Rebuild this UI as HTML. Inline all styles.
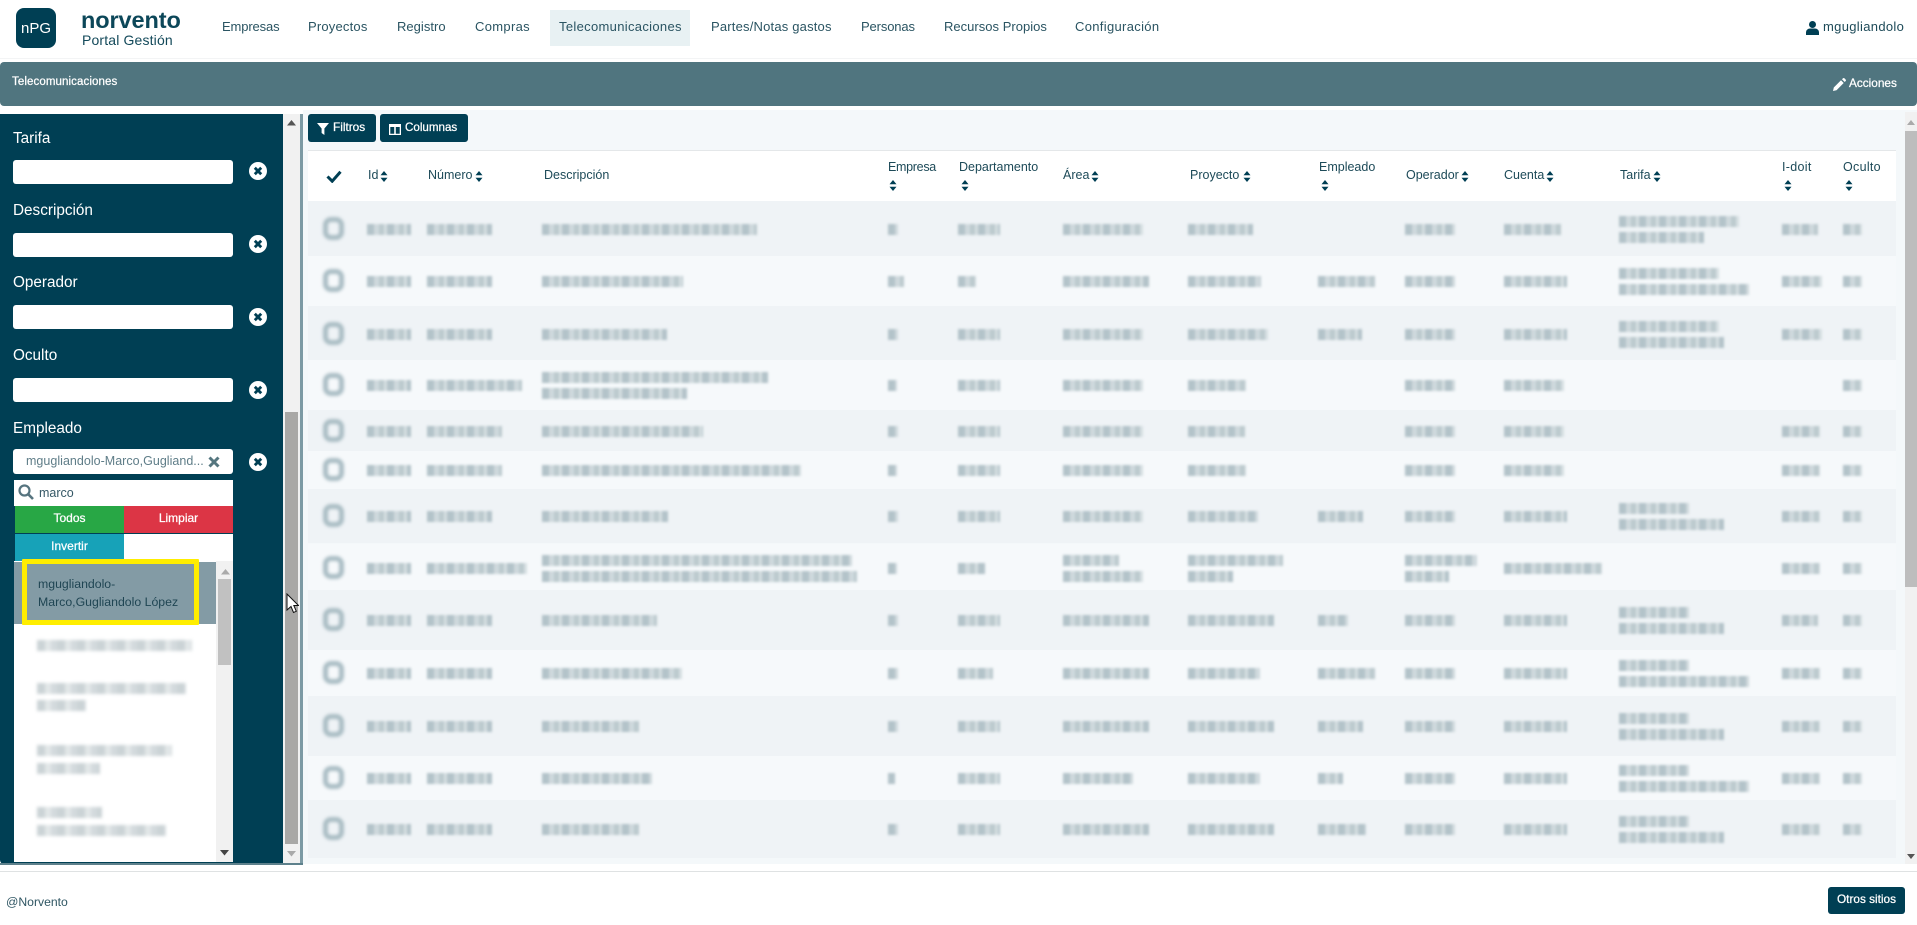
<!DOCTYPE html>
<html lang="es">
<head>
<meta charset="utf-8">
<title>Telecomunicaciones</title>
<style>
html,body{margin:0;padding:0;width:1917px;height:925px;overflow:hidden;background:#fff;font-family:"Liberation Sans",sans-serif;color:#1d4a58}
div,span,a,svg,i{position:absolute;display:block}
.t{white-space:nowrap}
.nav{top:19px;line-height:16px;font-size:13px;letter-spacing:.32px;color:#2a5462;white-space:nowrap}
.lab{left:13px;font-size:15.3px;line-height:18px;color:#fff;white-space:nowrap}
.inp{left:13px;width:220px;height:24px;background:#fff;border-radius:3px}
.clr{left:249px;width:18px;height:18px}
.th{font-size:12.5px;line-height:16px;color:#1d4a58;white-space:nowrap}
.so{width:8px;height:11px}
.r{left:308px;width:1588px}
.o{background:#eff3f6}.e{background:#f6f9fb}
.r i{top:50%;height:11px;margin-top:-5px;filter:blur(1.4px);background:repeating-linear-gradient(90deg,#b3c3c9 0 7px,#cfd9dd 7px 12px,#bccace 12px 17px,#d6dfe2 17px 20px)}
.r i.u{margin-top:-13px}
.r i.d{margin-top:3px}
.r b{position:absolute;display:block;left:15px;top:50%;margin-top:-12px;width:11px;height:13px;border:5px solid #aabdc4;border-radius:8px;filter:blur(1.5px)}
.c1{left:59px}.c2{left:119px}.c3{left:234px}.c4{left:580px}.c5{left:650px}.c6{left:755px}.c7{left:880px}.c8{left:1010px}.c9{left:1097px}.c10{left:1196px}.c11{left:1311px}.c12{left:1474px}.c13{left:1535px}
.li{left:37px;height:11px;filter:blur(1.5px);background:repeating-linear-gradient(90deg,#cbd3d6 0 8px,#e2e7e8 8px 14px,#d3dadd 14px 20px)}
.btn{top:114px;height:28px;background:#003f54;border-radius:3px;color:#fff;font-size:12px;-webkit-text-stroke:.25px #fff;line-height:25px;white-space:nowrap}
.fb{height:27px;line-height:25px;text-align:center;color:#fff;font-size:12px;-webkit-text-stroke:.25px #fff}
</style>
</head>
<body>
<!-- header -->
<div style="left:0;top:0;width:1917px;height:58px;background:#fff;border-bottom:1px solid #f3f4f5"></div>
<div style="left:16px;top:8px;width:40px;height:40px;background:#003f54;border-radius:8px;color:#fff;font-size:15px;line-height:41px;text-align:center">nPG</div>
<div class="t" style="left:81px;top:6px;font-size:23.5px;line-height:28px;font-weight:bold;color:#0c4759;letter-spacing:-.1px">norvento</div>
<div class="t" style="left:82px;top:32px;font-size:14px;line-height:17px;color:#13495a;letter-spacing:.15px">Portal Gestión</div>
<div style="left:550px;top:10px;width:140px;height:36px;background:#e8f1f3"></div>
<a class="nav" style="left:222px;letter-spacing:-.13px">Empresas</a>
<a class="nav" style="left:308px;letter-spacing:.19px">Proyectos</a>
<a class="nav" style="left:397px;letter-spacing:.02px">Registro</a>
<a class="nav" style="left:475px">Compras</a>
<a class="nav" style="left:559px">Telecomunicaciones</a>
<a class="nav" style="left:711px;letter-spacing:.19px">Partes/Notas gastos</a>
<a class="nav" style="left:861px;letter-spacing:-.13px">Personas</a>
<a class="nav" style="left:944px;letter-spacing:.02px">Recursos Propios</a>
<a class="nav" style="left:1075px">Configuración</a>
<svg style="left:1806px;top:21px" width="13" height="14" viewBox="0 0 13 14"><circle cx="6.5" cy="3.5" r="3.5" fill="#003f54"/><path d="M0 14v-2.500C0 9 2 7.500 4 7.500h5c2 0 4 1.500 4 4V14z" fill="#003f54"/></svg>
<a class="nav" style="left:1823px;color:#1d4a58">mgugliandolo</a>

<!-- section bar -->
<div style="left:0;top:62px;width:1917px;height:44px;background:#50757f;border-radius:4px"></div>
<div class="t" style="left:12px;top:74px;color:#fff;font-size:11.5px;line-height:16px;-webkit-text-stroke:.25px #fff;letter-spacing:.1px">Telecomunicaciones</div>
<svg style="left:1833px;top:78px" width="13" height="13" viewBox="0 0 13 13"><path d="M0 13l.8-3.500L8 2.300l2.700 2.700-7.200 7.200zM9 1.300l1-1c.4-.4 1-.4 1.400 0l1.300 1.300c.4.400.4 1 0 1.400l-1 1z" fill="#fff"/></svg>
<div class="t" style="left:1849px;top:75px;color:#fff;font-size:11.8px;line-height:16px;-webkit-text-stroke:.25px #fff">Acciones</div>

<!-- main bg -->
<div style="left:303px;top:110px;width:1614px;height:754px;background:#f4f8fa"></div>

<!-- left panel -->
<div style="left:0;top:114px;width:283px;height:750px;background:#003f54;border-radius:0 0 0 4px"></div>
<div style="left:283px;top:114px;width:17px;height:750px;background:#f1f1f1"></div>
<div style="left:285px;top:412px;width:13px;height:432px;background:#a9a8a6"></div>
<div style="left:300px;top:114px;width:3px;height:750px;background:#7c9aa4"></div>
<div style="left:0;top:863px;width:303px;height:2px;background:#5e818c"></div>
<svg style="left:287px;top:120px" width="9" height="6"><path d="M0 5.500L4.500 0 9 5.500z" fill="#555"/></svg>
<svg style="left:287px;top:851px" width="9" height="6"><path d="M0 0l4.500 5.500L9 0z" fill="#aaa"/></svg>

<div class="lab" style="top:130px">Tarifa</div>
<div class="inp" style="top:160px"></div>
<div class="lab" style="top:202px">Descripción</div>
<div class="inp" style="top:233px"></div>
<div class="lab" style="top:274px">Operador</div>
<div class="inp" style="top:305px"></div>
<div class="lab" style="top:347px">Oculto</div>
<div class="inp" style="top:378px"></div>
<div class="lab" style="top:420px">Empleado</div>

<svg class="clr" style="top:162px" viewBox="0 0 18 18"><circle cx="9" cy="9" r="9" fill="#fff"/><path d="M5.800 5.800l6.400 6.400M12.200 5.800l-6.400 6.400" stroke="#003f54" stroke-width="2.800"/></svg>
<svg class="clr" style="top:235px" viewBox="0 0 18 18"><circle cx="9" cy="9" r="9" fill="#fff"/><path d="M5.800 5.800l6.400 6.400M12.200 5.800l-6.400 6.400" stroke="#003f54" stroke-width="2.800"/></svg>
<svg class="clr" style="top:308px" viewBox="0 0 18 18"><circle cx="9" cy="9" r="9" fill="#fff"/><path d="M5.800 5.800l6.400 6.400M12.200 5.800l-6.400 6.400" stroke="#003f54" stroke-width="2.800"/></svg>
<svg class="clr" style="top:381px" viewBox="0 0 18 18"><circle cx="9" cy="9" r="9" fill="#fff"/><path d="M5.800 5.800l6.400 6.400M12.200 5.800l-6.400 6.400" stroke="#003f54" stroke-width="2.800"/></svg>
<svg class="clr" style="top:453px" viewBox="0 0 18 18"><circle cx="9" cy="9" r="9" fill="#fff"/><path d="M5.800 5.800l6.400 6.400M12.200 5.800l-6.400 6.400" stroke="#003f54" stroke-width="2.800"/></svg>

<!-- combo -->
<div style="left:13px;top:449px;width:220px;height:25px;background:#fff;border-radius:3px"></div>
<div class="t" style="left:26px;top:453px;font-size:12.5px;line-height:16px;color:#5f7d88;letter-spacing:.02px">mgugliandolo-Marco,Gugliand...</div>
<svg style="left:208px;top:456px" width="12" height="12"><path d="M1.500 1.500l9 9M10.500 1.500l-9 9" stroke="#55767f" stroke-width="3"/></svg>

<div style="left:14px;top:480px;width:219px;height:26px;background:#fff"></div>
<svg style="left:18px;top:484px" width="16" height="16" viewBox="0 0 16 16"><circle cx="6.500" cy="6.500" r="5" fill="none" stroke="#56747f" stroke-width="2.200"/><path d="M10.300 10.300l4.700 4.700" stroke="#56747f" stroke-width="2.600"/></svg>
<div class="t" style="left:39px;top:485px;font-size:12.5px;line-height:16px;color:#355866">marco</div>
<div class="fb" style="left:15px;top:506px;width:109px;background:#28a745">Todos</div>
<div class="fb" style="left:124px;top:506px;width:109px;background:#dc3545">Limpiar</div>
<div class="fb" style="left:15px;top:534px;width:109px;background:#17a2b8">Invertir</div>
<div style="left:124px;top:534px;width:109px;height:27px;background:#fff"></div>

<!-- list -->
<div style="left:14px;top:561px;width:219px;height:301px;background:#fff"></div>
<div style="left:14px;top:562px;width:202px;height:62px;background:#839ba5"></div>
<div style="left:22px;top:559px;width:167px;height:56px;border:5px solid #ffee00;border-radius:1px"></div>
<div class="t" style="left:38px;top:575px;font-size:12.3px;line-height:18px;color:#1f4553">mgugliandolo-<br>Marco,Gugliandolo López</div>
<div style="left:216px;top:561px;width:17px;height:301px;background:#f1f1f1"></div>
<div style="left:218px;top:579px;width:13px;height:86px;background:#c1c1c1"></div>
<svg style="left:221px;top:569px" width="9" height="6"><path d="M0 5.500L4.500 0 9 5.500z" fill="#aaa"/></svg>
<svg style="left:220px;top:850px" width="9" height="6"><path d="M0 0l4.500 5.500L9 0z" fill="#444"/></svg>
<div class="li" style="top:640px;width:155px"></div>
<div class="li" style="top:683px;width:149px"></div>
<div class="li" style="top:700px;width:49px"></div>
<div class="li" style="top:745px;width:135px"></div>
<div class="li" style="top:763px;width:63px"></div>
<div class="li" style="top:807px;width:65px"></div>
<div class="li" style="top:825px;width:129px"></div>

<!-- buttons -->
<div class="btn" style="left:308px;width:68px">
<svg style="left:9px;top:9px" width="12" height="12" viewBox="0 0 12 12"><path d="M0 0h12L7.400 5.500V12L4.600 10V5.500z" fill="#fff"/></svg>
<span style="left:25px;top:1px;font-size:11.8px">Filtros</span></div>
<div class="btn" style="left:380px;width:88px">
<svg style="left:9px;top:10px" width="12" height="11" viewBox="0 0 12 11"><path d="M0 0h12v11H0zM1.300 3v6.700h3.900V3zm5.500 0v6.700h3.900V3z" fill="#fff" fill-rule="evenodd"/></svg>
<span style="left:25px;top:1px;font-size:11.6px">Columnas</span></div>

<!-- table -->
<div style="left:308px;top:150px;width:1588px;height:51px;background:#fff;border-top:1px solid #e4e7e9;box-sizing:border-box"></div>
<svg style="left:326px;top:170px" width="16" height="13" viewBox="0 0 16 13"><path d="M1.500 6.500l4.700 4.700L14.500 1.800" fill="none" stroke="#003f54" stroke-width="3"/></svg>

<div class="th" style="left:368px;top:167px">Id</div>
<svg class="so" style="left:380px;top:171px" viewBox="0 0 8 11"><path d="M4 0l3.500 4.300H.5zM4 11L.5 6.700h7z" fill="#003f54"/></svg>
<div class="th" style="left:428px;top:167px">Número</div>
<svg class="so" style="left:475px;top:171px" viewBox="0 0 8 11"><path d="M4 0l3.500 4.300H.5zM4 11L.5 6.700h7z" fill="#003f54"/></svg>
<div class="th" style="left:544px;top:167px">Descripción</div>
<div class="th" style="left:888px;top:159px;letter-spacing:-.3px">Empresa</div>
<svg class="so" style="left:889px;top:180px" viewBox="0 0 8 11"><path d="M4 0l3.500 4.300H.5zM4 11L.5 6.700h7z" fill="#003f54"/></svg>
<div class="th" style="left:959px;top:159px">Departamento</div>
<svg class="so" style="left:961px;top:180px" viewBox="0 0 8 11"><path d="M4 0l3.500 4.300H.5zM4 11L.5 6.700h7z" fill="#003f54"/></svg>
<div class="th" style="left:1063px;top:167px">Área</div>
<svg class="so" style="left:1091px;top:171px" viewBox="0 0 8 11"><path d="M4 0l3.500 4.300H.5zM4 11L.5 6.700h7z" fill="#003f54"/></svg>
<div class="th" style="left:1190px;top:167px">Proyecto</div>
<svg class="so" style="left:1243px;top:171px" viewBox="0 0 8 11"><path d="M4 0l3.500 4.300H.5zM4 11L.5 6.700h7z" fill="#003f54"/></svg>
<div class="th" style="left:1319px;top:159px">Empleado</div>
<svg class="so" style="left:1321px;top:180px" viewBox="0 0 8 11"><path d="M4 0l3.500 4.300H.5zM4 11L.5 6.700h7z" fill="#003f54"/></svg>
<div class="th" style="left:1406px;top:167px">Operador</div>
<svg class="so" style="left:1461px;top:171px" viewBox="0 0 8 11"><path d="M4 0l3.500 4.300H.5zM4 11L.5 6.700h7z" fill="#003f54"/></svg>
<div class="th" style="left:1504px;top:167px">Cuenta</div>
<svg class="so" style="left:1546px;top:171px" viewBox="0 0 8 11"><path d="M4 0l3.500 4.300H.5zM4 11L.5 6.700h7z" fill="#003f54"/></svg>
<div class="th" style="left:1620px;top:167px">Tarifa</div>
<svg class="so" style="left:1653px;top:171px" viewBox="0 0 8 11"><path d="M4 0l3.500 4.300H.5zM4 11L.5 6.700h7z" fill="#003f54"/></svg>
<div class="th" style="left:1782px;top:159px;letter-spacing:.3px">I-doit</div>
<svg class="so" style="left:1784px;top:180px" viewBox="0 0 8 11"><path d="M4 0l3.500 4.300H.5zM4 11L.5 6.700h7z" fill="#003f54"/></svg>
<div class="th" style="left:1843px;top:159px;letter-spacing:.3px">Oculto</div>
<svg class="so" style="left:1845px;top:180px" viewBox="0 0 8 11"><path d="M4 0l3.500 4.300H.5zM4 11L.5 6.700h7z" fill="#003f54"/></svg>

<!-- rows -->
<div class="r o" style="top:201px;height:55px"><b></b><i class="c1" style="width:44px"></i><i class="c2" style="width:65px"></i><i class="c3" style="width:215px"></i><i class="c4" style="width:10px"></i><i class="c5" style="width:42px"></i><i class="c6" style="width:80px"></i><i class="c7" style="width:65px"></i><i class="c9" style="width:50px"></i><i class="c10" style="width:57px"></i><i class="c11 u" style="width:120px"></i><i class="c11 d" style="width:85px"></i><i class="c12" style="width:36px"></i><i class="c13" style="width:19px"></i></div>
<div class="r e" style="top:256px;height:50px"><b></b><i class="c1" style="width:44px"></i><i class="c2" style="width:65px"></i><i class="c3" style="width:141px"></i><i class="c4" style="width:16px"></i><i class="c5" style="width:18px"></i><i class="c6" style="width:86px"></i><i class="c7" style="width:73px"></i><i class="c8" style="width:57px"></i><i class="c9" style="width:50px"></i><i class="c10" style="width:63px"></i><i class="c11 u" style="width:100px"></i><i class="c11 d" style="width:130px"></i><i class="c12" style="width:40px"></i><i class="c13" style="width:19px"></i></div>
<div class="r o" style="top:306px;height:55px"><b></b><i class="c1" style="width:44px"></i><i class="c2" style="width:65px"></i><i class="c3" style="width:125px"></i><i class="c4" style="width:10px"></i><i class="c5" style="width:42px"></i><i class="c6" style="width:80px"></i><i class="c7" style="width:80px"></i><i class="c8" style="width:44px"></i><i class="c9" style="width:50px"></i><i class="c10" style="width:63px"></i><i class="c11 u" style="width:100px"></i><i class="c11 d" style="width:105px"></i><i class="c12" style="width:40px"></i><i class="c13" style="width:19px"></i></div>
<div class="r e" style="top:360px;height:50px"><b></b><i class="c1" style="width:44px"></i><i class="c2" style="width:95px"></i><i class="c3 u" style="width:226px"></i><i class="c3 d" style="width:145px"></i><i class="c4" style="width:9px"></i><i class="c5" style="width:42px"></i><i class="c6" style="width:80px"></i><i class="c7" style="width:58px"></i><i class="c9" style="width:50px"></i><i class="c10" style="width:60px"></i><i class="c13" style="width:19px"></i></div>
<div class="r o" style="top:410px;height:41px"><b></b><i class="c1" style="width:44px"></i><i class="c2" style="width:75px"></i><i class="c3" style="width:161px"></i><i class="c4" style="width:10px"></i><i class="c5" style="width:42px"></i><i class="c6" style="width:80px"></i><i class="c7" style="width:57px"></i><i class="c9" style="width:50px"></i><i class="c10" style="width:60px"></i><i class="c12" style="width:38px"></i><i class="c13" style="width:19px"></i></div>
<div class="r e" style="top:451px;height:38px"><b></b><i class="c1" style="width:44px"></i><i class="c2" style="width:75px"></i><i class="c3" style="width:259px"></i><i class="c4" style="width:9px"></i><i class="c5" style="width:42px"></i><i class="c6" style="width:80px"></i><i class="c7" style="width:58px"></i><i class="c9" style="width:50px"></i><i class="c10" style="width:60px"></i><i class="c12" style="width:38px"></i><i class="c13" style="width:19px"></i></div>
<div class="r o" style="top:489px;height:54px"><b></b><i class="c1" style="width:44px"></i><i class="c2" style="width:65px"></i><i class="c3" style="width:126px"></i><i class="c4" style="width:10px"></i><i class="c5" style="width:42px"></i><i class="c6" style="width:80px"></i><i class="c7" style="width:70px"></i><i class="c8" style="width:45px"></i><i class="c9" style="width:50px"></i><i class="c10" style="width:63px"></i><i class="c11 u" style="width:70px"></i><i class="c11 d" style="width:105px"></i><i class="c12" style="width:38px"></i><i class="c13" style="width:19px"></i></div>
<div class="r e" style="top:543px;height:47px;margin-top:1px"><b></b><i class="c1" style="width:44px"></i><i class="c2" style="width:100px"></i><i class="c3 u" style="width:310px"></i><i class="c3 d" style="width:315px"></i><i class="c4" style="width:9px"></i><i class="c5" style="width:27px"></i><i class="c6 u" style="width:56px"></i><i class="c6 d" style="width:80px"></i><i class="c7 u" style="width:95px"></i><i class="c7 d" style="width:45px"></i><i class="c9 u" style="width:72px"></i><i class="c9 d" style="width:44px"></i><i class="c10" style="width:98px"></i><i class="c12" style="width:38px"></i><i class="c13" style="width:19px"></i></div>
<div class="r o" style="top:590px;height:60px"><b></b><i class="c1" style="width:44px"></i><i class="c2" style="width:65px"></i><i class="c3" style="width:115px"></i><i class="c4" style="width:10px"></i><i class="c5" style="width:42px"></i><i class="c6" style="width:86px"></i><i class="c7" style="width:86px"></i><i class="c8" style="width:30px"></i><i class="c9" style="width:50px"></i><i class="c10" style="width:63px"></i><i class="c11 u" style="width:70px"></i><i class="c11 d" style="width:105px"></i><i class="c12" style="width:36px"></i><i class="c13" style="width:19px"></i></div>
<div class="r e" style="top:650px;height:46px"><b></b><i class="c1" style="width:44px"></i><i class="c2" style="width:65px"></i><i class="c3" style="width:140px"></i><i class="c4" style="width:10px"></i><i class="c5" style="width:35px"></i><i class="c6" style="width:86px"></i><i class="c7" style="width:72px"></i><i class="c8" style="width:57px"></i><i class="c9" style="width:50px"></i><i class="c10" style="width:63px"></i><i class="c11 u" style="width:70px"></i><i class="c11 d" style="width:130px"></i><i class="c12" style="width:38px"></i><i class="c13" style="width:19px"></i></div>
<div class="r o" style="top:696px;height:60px"><b></b><i class="c1" style="width:44px"></i><i class="c2" style="width:65px"></i><i class="c3" style="width:97px"></i><i class="c4" style="width:10px"></i><i class="c5" style="width:42px"></i><i class="c6" style="width:86px"></i><i class="c7" style="width:86px"></i><i class="c8" style="width:45px"></i><i class="c9" style="width:50px"></i><i class="c10" style="width:63px"></i><i class="c11 u" style="width:70px"></i><i class="c11 d" style="width:105px"></i><i class="c12" style="width:38px"></i><i class="c13" style="width:19px"></i></div>
<div class="r e" style="top:756px;height:44px"><b></b><i class="c1" style="width:44px"></i><i class="c2" style="width:65px"></i><i class="c3" style="width:110px"></i><i class="c4" style="width:7px"></i><i class="c5" style="width:42px"></i><i class="c6" style="width:70px"></i><i class="c7" style="width:72px"></i><i class="c8" style="width:25px"></i><i class="c9" style="width:50px"></i><i class="c10" style="width:63px"></i><i class="c11 u" style="width:70px"></i><i class="c11 d" style="width:130px"></i><i class="c12" style="width:38px"></i><i class="c13" style="width:19px"></i></div>
<div class="r o" style="top:800px;height:58px"><b></b><i class="c1" style="width:44px"></i><i class="c2" style="width:65px"></i><i class="c3" style="width:97px"></i><i class="c4" style="width:10px"></i><i class="c5" style="width:42px"></i><i class="c6" style="width:86px"></i><i class="c7" style="width:86px"></i><i class="c8" style="width:48px"></i><i class="c9" style="width:50px"></i><i class="c10" style="width:63px"></i><i class="c11 u" style="width:70px"></i><i class="c11 d" style="width:105px"></i><i class="c12" style="width:38px"></i><i class="c13" style="width:19px"></i></div>

<!-- right scrollbar -->
<div style="left:1905px;top:112px;width:12px;height:752px;background:#f1f1f1"></div>
<div style="left:1905px;top:131px;width:12px;height:456px;background:#bdbdbd"></div>
<svg style="left:1907px;top:120px" width="8" height="5"><path d="M0 5L4 0l4 5z" fill="#aaa"/></svg>
<svg style="left:1907px;top:854px" width="8" height="5"><path d="M0 0l4 5 4-5z" fill="#555"/></svg>

<!-- cursor -->
<svg style="left:286px;top:593px" width="13" height="21" viewBox="0 0 13 21"><path d="M1 1v16l4-3.500 2.500 6 2.800-1.200-2.500-5.800H12.500z" fill="#fff" stroke="#111" stroke-width="1"/></svg>

<!-- footer -->
<div style="left:0;top:871px;width:1917px;height:1px;background:#dfe2e3"></div>
<div class="t" style="left:6px;top:894px;font-size:12.2px;line-height:16px;color:#2f5663">@Norvento</div>
<div style="left:1828px;top:887px;width:77px;height:27px;background:#003f54;border-radius:3px;color:#fff;font-size:11.8px;-webkit-text-stroke:.25px #fff;line-height:25px;text-align:center">Otros sitios</div>
</body>
</html>
